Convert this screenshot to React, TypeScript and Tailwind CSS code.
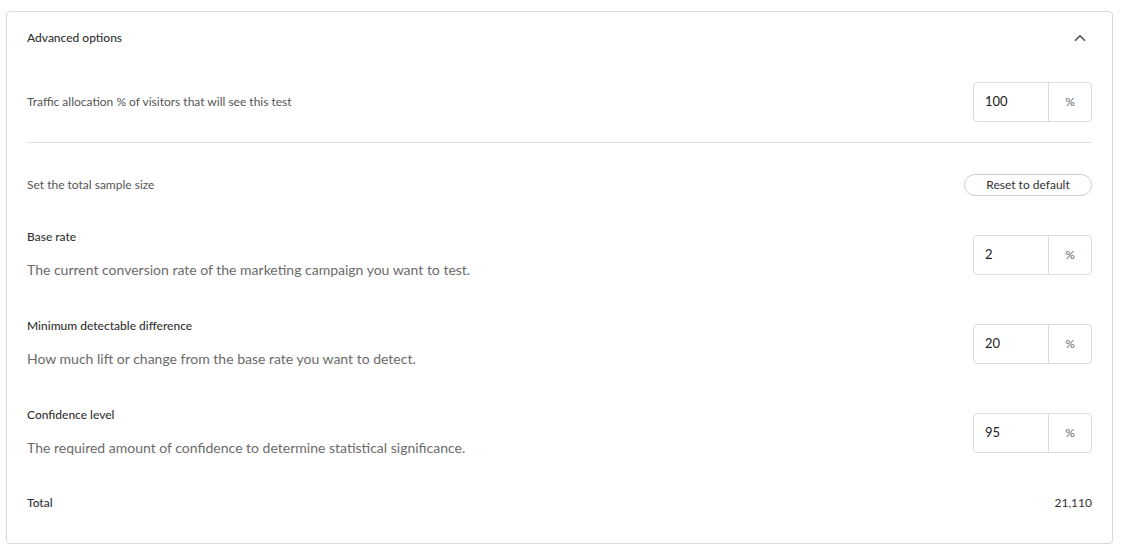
import { ChevronUp } from "lucide-react";

type Row = { label: string; desc: string; value: string };

const rows: Row[] = [
  { label: "Base rate", desc: "The current conversion rate of the marketing campaign you want to test.", value: "2" },
  { label: "Minimum detectable difference", desc: "How much lift or change from the base rate you want to detect.", value: "20" },
  { label: "Confidence level", desc: "The required amount of confidence to determine statistical significance.", value: "95" },
];

function PercentInput({ value }: { value: string }) {
  return (
    <div className="flex h-[40px] w-[119px] rounded-[4px] border border-[#dcdcdc] bg-white">
      <div className="flex w-[74px] items-center pl-[11px] text-[13px] text-[#222]">{value}</div>
      <div className="flex flex-1 items-center justify-center border-l border-[#dcdcdc] text-[12px] text-[#666]">%</div>
    </div>
  );
}

export default function App() {
  return (
    <div className="min-h-screen bg-white pl-[6px] pr-[18px] pt-[11px] font-['Lato','Noto_Sans',sans-serif]">
      <div className="rounded-[4px] border border-[#d9d9d9] px-5 pb-[14px]">
        <div className="flex h-[52px] items-center justify-between">
          <span className="text-[12px] font-medium text-[#333]">Advanced options</span>
          <button className="flex h-6 w-6 items-center justify-center text-[#555]">
            <ChevronUp className="h-[18px] w-[18px]" strokeWidth={2.3} />
          </button>
        </div>

        <div className="mt-[18px] flex h-[40px] items-center justify-between">
          <span className="text-[12px] text-[#555]">Traffic allocation % of visitors that will see this test</span>
          <PercentInput value="100" />
        </div>

        <div className="mt-5 h-px bg-[#e0e0e0]" />

        <div className="mt-[31px] flex h-[22px] items-center justify-between">
          <span className="text-[12px] text-[#555]">Set the total sample size</span>
          <button className="flex h-[22px] w-[128px] items-center justify-center rounded-full border border-[#cfcfcf] text-[12px] text-[#333]">
            Reset to default
          </button>
        </div>

        <div className="mt-[14px]">
          {rows.map((r) => (
            <div key={r.label} className="flex h-[89px] items-center justify-between">
              <div className="flex flex-col gap-[15px]">
                <span className="text-[12px] font-medium leading-4 text-[#333]">{r.label}</span>
                <span className="text-[14px] leading-5 text-[#6b6b6b]">{r.desc}</span>
              </div>
              <PercentInput value={r.value} />
            </div>
          ))}
        </div>

        <div className="flex h-[52px] items-center justify-between text-[12px] text-[#333]">
          <span className="font-medium">Total</span>
          <span>21,110</span>
        </div>
      </div>
    </div>
  );
}
